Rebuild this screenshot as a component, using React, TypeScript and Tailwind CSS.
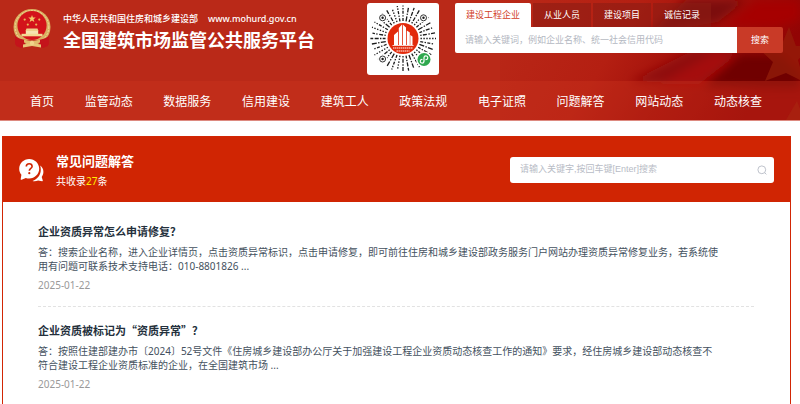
const tabs = ["从业人员", "建设项目", "诚信记录"]

const navItems = [
  "首页",
  "监管动态",
  "数据服务",
  "信用建设",
  "建筑工人",
  "政策法规",
  "电子证照",
  "问题解答",
  "网站动态",
  "动态核查",
]

const questions = [
  {
    title: "企业资质异常怎么申请修复？",
    lines: [
      "答：搜索企业名称，进入企业详情页，点击资质异常标识，点击申请修复，即可前往住房和城乡建设部政务服务门户网站办理资质异常修复业务，若系统使",
      "用有问题可联系技术支持电话：010-8801826 ...",
    ],
    date: "2025-01-22",
  },
  {
    title: "企业资质被标记为“资质异常”？",
    lines: [
      "答：按照住建部建办市〔2024〕52号文件《住房城乡建设部办公厅关于加强建设工程企业资质动态核查工作的通知》要求，经住房城乡建设部动态核查不",
      "符合建设工程企业资质标准的企业，在全国建筑市场 ...",
    ],
    date: "2025-01-22",
  },
]

export default function App() {
  return (
    <div className="min-h-screen bg-white font-['Noto_Sans','Noto_Sans_CJK_SC',sans-serif]" lang="zh-CN">
      <Header />
      <main className="pt-[15px] pl-[2px] pr-[9px]">
        <Faq />
      </main>
    </div>
  )
}

function Header() {
  return (
    <header className="relative border-b border-[#dd8a80] bg-[#ba2918]">
      <FlagBackdrop />
      <div className="relative flex h-[81px] items-start justify-between pr-[17px] pl-[13px]">
        <div className="flex shrink-0 items-start">
          <Emblem />
          <div className="ml-3 pt-3 whitespace-nowrap text-white">
            <div className="flex gap-[10px] text-[9px] leading-[14px] font-medium">
              <span>中华人民共和国住房和城乡建设部</span>
              <span>www.mohurd.gov.cn</span>
            </div>
            <h1 className="text-[18px] leading-[28px] font-bold">全国建筑市场监管公共服务平台</h1>
          </div>
          <MiniCode />
        </div>
        <SiteSearch />
      </div>
      <nav className="relative flex h-[39px] items-center justify-between bg-[#cf3620]/35 pt-[2px] pr-[38px] pl-[30px]">
        {navItems.map((item) => (
          <a key={item} href="#" className="text-[12px] leading-[18px] text-white">
            {item}
          </a>
        ))}
      </nav>
    </header>
  )
}

function SiteSearch() {
  return (
    <form className="w-[328px] pt-[3px]" onSubmit={(e) => e.preventDefault()}>
      <div className="flex gap-[2px] text-[9px] leading-[24px]">
        <button type="button" className="rounded-t-[2px] bg-white px-[11px] text-[#d2401f]">
          建设工程企业
        </button>
        {tabs.map((tab) => (
          <button key={tab} type="button" className="bg-[#8c1c14]/60 px-[11px] text-white">
            {tab}
          </button>
        ))}
      </div>
      <div className="flex h-[26px]">
        <input
          type="text"
          aria-label="企业搜索"
          placeholder="请输入关键词，例如企业名称、统一社会信用代码"
          className="min-w-0 flex-1 rounded-bl-[2px] bg-white px-[10px] text-[9px] outline-none placeholder:text-[#b4b8c2]"
        />
        <button type="submit" className="w-[46px] rounded-r-[2px] bg-[#c93a27] text-[9px] text-white">
          搜索
        </button>
      </div>
    </form>
  )
}

function Faq() {
  return (
    <section className="border border-[#d22604] bg-white">
      <div className="flex h-[65px] items-center justify-between bg-[#d02503] pr-4 pl-[15px]">
        <div className="flex items-center gap-3">
          <QuestionIcon />
          <div className="text-white">
            <h2 className="text-[13px] leading-[22px] font-bold">常见问题解答</h2>
            <p className="text-[10px] leading-[18px]">
              共收录<span className="text-[#fff000]">27</span>条
            </p>
          </div>
        </div>
        <div className="flex h-[26px] w-[264px] items-center rounded-[3px] bg-white pr-[7px] pl-[10px]">
          <input
            type="text"
            aria-label="问题搜索"
            placeholder="请输入关键字,按回车键[Enter]搜索"
            className="min-w-0 flex-1 font-['Liberation_Sans','Noto_Sans_CJK_SC',sans-serif] text-[9px] outline-none placeholder:text-[#b8bcc6]"
          />
          <svg viewBox="0 0 10 10" className="size-[10px]" fill="none" stroke="#b8bcc6" strokeWidth="0.9">
            <circle cx="4.8" cy="4.8" r="3.9" />
            <path d="M7.6 7.6 9.4 9.4" />
          </svg>
        </div>
      </div>
      <div className="pr-[36px] pl-[35px]">
        {questions.map((q) => (
          <article
            key={q.title}
            className="border-b border-dashed border-[#e2e2e2] pt-[14px] pb-[14px] first:pt-[20px] last:border-b-0"
          >
            <h3 className="font-['Noto_Sans_CJK_SC',sans-serif] text-[11px] leading-[18px] font-bold text-[#24303c]">
              <a href="#">{q.title}</a>
            </h3>
            <p className="mt-[5px] text-[10px] leading-[14px] whitespace-nowrap text-[#44515e]">
              {q.lines[0]}
              <br />
              {q.lines[1]}
            </p>
            <time className="mt-[5px] block text-[10px] leading-[14px] text-[#999999]">{q.date}</time>
          </article>
        ))}
      </div>
    </section>
  )
}

function QuestionIcon() {
  return (
    <svg viewBox="0 0 26 26" className="size-[26px]">
      <path
        d="M22.2 8.6c2 1.5 3.2 3.6 3.2 6.2 0 2-.6 3.7-1.7 5.1l1.1 3.6c.1.5-.2.8-.7.7l-4-.8c-1.7.8-3.8 1-5.6.6 4.8-1.7 8.3-6 8.3-11.3 0-1.4-.2-2.8-.6-4.1z"
        fill="#fff"
      />
      <path
        d="M11.2 2C5.7 2 1.2 6.3 1.2 11.7c0 2.3.8 4.4 2.2 6.1l-.7 4.2c-.1.7.3 1 .9.8l4.2-1.9c1.1.4 2.2.5 3.4.5 5.5 0 10-4.3 10-9.7S16.7 2 11.2 2z"
        fill="#fff"
      />
      <path
        d="M8.3 9.6c0-1.7 1.2-2.8 2.9-2.8s2.9 1.1 2.9 2.6c0 2-2.8 2.2-2.8 4.4"
        fill="none"
        stroke="#d02503"
        strokeWidth="1.6"
      />
      <circle cx="11.3" cy="16.2" r="1.1" fill="#d02503" />
    </svg>
  )
}

function Emblem() {
  return (
    <svg viewBox="0 0 38 42" className="mt-2 h-[42px] w-[38px]">
      <path d="M3 27v11l5 2 5-2h12l5 2 5-2V27z" fill="#c4141b" />
      <ellipse cx="19" cy="19" rx="18.5" ry="18" fill="#d9b061" />
      <ellipse cx="19" cy="19" rx="16.8" ry="16.5" fill="none" stroke="#f2d798" strokeWidth="1" strokeDasharray="2 1.2" />
      <circle cx="19" cy="17.5" r="14.6" fill="#d3131a" />
      <path d="m19 7 .95 2.6h2.8l-2.2 1.7.8 2.7L19 12.4 16.65 14l.8-2.7-2.2-1.7h2.8z" fill="#f3cb69" />
      <g fill="#e9b754">
        <circle cx="11.7" cy="11.6" r="1.1" />
        <circle cx="26.3" cy="11.6" r="1.1" />
        <circle cx="14.8" cy="16.6" r="1.1" />
        <circle cx="23.2" cy="16.6" r="1.1" />
      </g>
      <path d="M13.5 20.5h11l1 2.5h-13z" fill="#edd08a" />
      <path d="M12.8 23h12.4v3H12.8z" fill="#f6e3b0" />
      <path d="M8.5 25.8h21v2.5h-21z" fill="#f3d993" />
      <path d="M2 28c5 3.500 11 4.500 17 4.500S31 31.500 36 28v8.500l-6 2-5-3.500H13l-5 3.500-6-2z" fill="#c4141b" />
      <path d="M11 31.5 19 33.5l8-2v3L19 37l-8-2.5z" fill="#e2bd6c" />
      <path d="m10 36.5 9-1.5 9 1.5v3L19 38l-9 1.5z" fill="#e7c678" />
      <circle cx="19" cy="35" r="2.2" fill="#f1d48b" />
    </svg>
  )
}

// dash patterns shared by the rays of the round code
const rayDashes = ["3 1.4 1.4 1.4", "1.4 1.3 4 1.6", "5 1.4 1.4 1.3", "1.4 1.5", "2.8 1.3 1.4 1.3 4 1.5"]

function MiniCode() {
  const rays = Array.from({ length: 36 }, (_, i) => i)
  return (
    <svg viewBox="0 0 72 72" className="mt-[3px] ml-[52px] size-[72px]">
      <rect width="72" height="72" rx="3" fill="#fff" />
      <g stroke="#1c1c1c" strokeWidth="1.3">
        {rays.map((i) => (
          <line
            key={i}
            x1="36"
            y1={35.5 - 17.5}
            x2="36"
            y2={35.5 - (i % 3 === 1 ? 31 : 33)}
            strokeDasharray={rayDashes[(i * 7) % 5]}
            transform={`rotate(${i * 10} 36 35.5)`}
          />
        ))}
      </g>
      <g fill="#fff">
        <circle cx="15.6" cy="14.8" r="4.6" />
        <circle cx="56.5" cy="14.8" r="4.6" />
        <circle cx="15.6" cy="56" r="4.6" />
        <circle cx="57" cy="56.5" r="8" />
      </g>
      <g fill="#1c1c1c">
        <circle cx="15.6" cy="14.8" r="1.2" />
        <circle cx="56.5" cy="14.8" r="1.2" />
        <circle cx="15.6" cy="56" r="1.2" />
      </g>
      <g fill="none" stroke="#1c1c1c" strokeWidth="0.9">
        <circle cx="15.6" cy="14.8" r="3" />
        <circle cx="56.5" cy="14.8" r="3" />
        <circle cx="15.6" cy="56" r="3" />
      </g>
      <circle cx="36" cy="35.5" r="15.5" fill="#e22a0c" />
      <path
        d="M27 42V32l4-3.5V42zM31.8 42V25l3.2-3.5V42zM35.800 42V21.500l3.200 3V42zM39.800 42V27.500l3 2V42zM43.300 42V32l2.200 1.500V42z"
        fill="#fff"
      />
      <path d="M25.5 42.5h21" stroke="#fff" strokeWidth="0.8" />
      <path d="M26 45h20M29.5 48h13" stroke="#f8b5a6" strokeWidth="1.4" strokeDasharray="1.5 0.5" />
      <circle cx="57" cy="56.5" r="6.5" fill="#2fa84f" />
      <path
        d="M55 56.4a1.900 1.900 0 1 0 2 2v-3.800a1.900 1.900 0 1 1 2 2"
        fill="none"
        stroke="#fff"
        strokeWidth="1.2"
        strokeLinecap="round"
      />
    </svg>
  )
}

function FlagBackdrop() {
  return (
    <svg viewBox="0 0 300 120" preserveAspectRatio="none" className="absolute top-0 right-0 h-full w-[300px]">
      <defs>
        <linearGradient id="cloth" x1="0" y1="0" x2="1" y2="0.25">
          <stop offset="0" stopColor="#ba2918" />
          <stop offset="0.45" stopColor="#b41f12" />
          <stop offset="0.7" stopColor="#a2100a" />
          <stop offset="1" stopColor="#920404" />
        </linearGradient>
        <filter id="fold" x="-20%" y="-20%" width="140%" height="140%">
          <feGaussianBlur stdDeviation="5" />
        </filter>
      </defs>
      <rect width="300" height="120" fill="url(#cloth)" />
      <g filter="url(#fold)">
        <path d="M186 0h60l-28 22-70 12z" fill="#7c0e08" />
        <path d="M130 82 190 52l50-8-40 38z" fill="#8f100a" />
        <path d="M160 84 215 52l20 4-36 28z" fill="#a5100b" />
        <path d="M204 86 240 54h40l20 20v14z" fill="#700202" />
        <path d="M225 26 256 0h44v20l-24 8z" fill="#a60202" />
      </g>
      <path d="m289 27 7 19h14l-12 14 6 22-18-9-21 8 8-19-13-12 20-1z" fill="#96200a" opacity="0.7" />
      <path d="m297 101 3 8v11h-14z" fill="#96200a" opacity="0.6" />
    </svg>
  )
}
